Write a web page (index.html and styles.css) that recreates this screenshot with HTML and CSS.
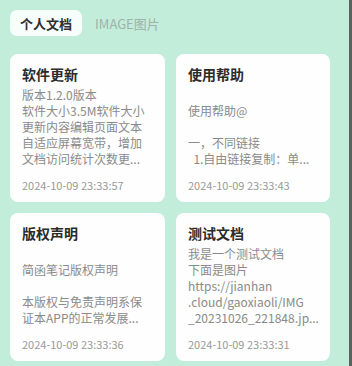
FILE: index.html
```html
<!DOCTYPE html>
<html lang="zh">
<head>
<meta charset="utf-8">
<link rel="stylesheet" href="styles.css">
</head>
<body>
<div class="screen">
  <div class="tabs">
    <div class="tab active">个人文档</div>
    <div class="tab">IMAGE图片</div>
  </div>
  <div class="grid">
    <div class="card">
      <div class="title">软件更新</div>
      <div class="body">版本1.2.0版本<br>软件大小3.5M软件大小<br>更新内容编辑页面文本<br>自适应屏幕宽带，增加<br>文档访问统计次数更...</div>
      <div class="date">2024-10-09 23:33:57</div>
    </div>
    <div class="card">
      <div class="title">使用帮助</div>
      <div class="body"><br>使用帮助@<br><br>一，不同链接<br>&nbsp;&nbsp;1.自由链接复制：单...</div>
      <div class="date">2024-10-09 23:33:43</div>
    </div>
    <div class="card">
      <div class="title">版权声明</div>
      <div class="body"><br>简函笔记版权声明<br><br>本版权与免责声明系保<br>证本APP的正常发展...</div>
      <div class="date">2024-10-09 23:33:36</div>
    </div>
    <div class="card">
      <div class="title">测试文档</div>
      <div class="body">我是一个测试文档<br>下面是图片<br>https://jianhan<br>.cloud/gaoxiaoli/IMG<br>_20231026_221848.jp...</div>
      <div class="date">2024-10-09 23:33:31</div>
    </div>
  </div>
</div>
</body>
</html>
```
FILE: styles.css
```css
html, body {
  margin: 0;
  padding: 0;
  background: #c3eddb;
}
body {
  width: 352px;
  height: 366px;
  overflow: hidden;
  font-family: "Noto Sans CJK SC", "Noto Sans", sans-serif;
}
.screen {
  box-sizing: border-box;
  height: 366px;
  padding: 10px 0 0 10px;
  border-right: 3px solid #5d625f;
}
.tabs {
  display: flex;
  gap: 3px;
  height: 26px;
  margin-bottom: 18px;
}
.tab {
  display: flex;
  align-items: center;
  padding: 0 10px;
  font-size: 13px;
  color: #9fb2a8;
  border-radius: 7px;
}
.tab.active {
  background: #f7fdfa;
  color: #2f2f2f;
  font-weight: 700;
}
.grid {
  display: grid;
  grid-template-columns: 155px 154px;
  column-gap: 11px;
  row-gap: 11px;
}
.card {
  background: #fdfefd;
  border-radius: 8px;
  padding: 10px 12px 9px 12px;
}
.title {
  font-size: 14px;
  line-height: 20px;
  font-weight: 700;
  color: #2b2b2b;
}
.body {
  margin-top: 3px;
  font-size: 12px;
  line-height: 16px;
  color: #8a8a8a;
  white-space: nowrap;
  overflow: hidden;
}
.date {
  margin-top: 10px;
  font-size: 11px;
  line-height: 16px;
  color: #9a9a9a;
}
```
